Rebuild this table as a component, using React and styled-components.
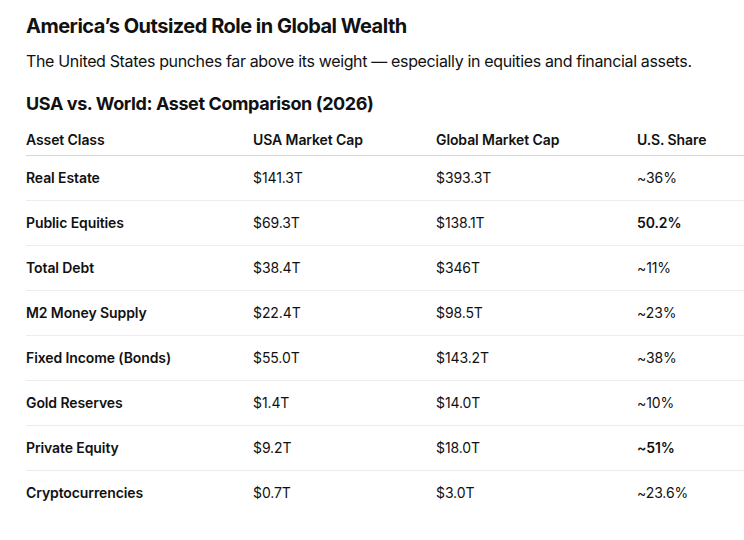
import React from "react";
import styled, { createGlobalStyle } from "styled-components";

const GlobalStyle = createGlobalStyle`
  body {
    margin: 0;
    background: #ffffff;
    font-family: Inter, "Liberation Sans", sans-serif;
    color: #111111;
  }
`;

const Page = styled.div`
  padding: 13px 0 0 26px;
  width: 744px;
  box-sizing: border-box;
  overflow: hidden;
`;

const Title = styled.h1`
  margin: 0;
  font-size: 20px;
  line-height: 26px;
  font-weight: 700;
  letter-spacing: -0.5px;
`;

const Lead = styled.p`
  margin: 10px 0 0;
  font-size: 16px;
  line-height: 24px;
  font-weight: 400;
  letter-spacing: -0.35px;
`;

const Section = styled.h2`
  margin: 19px 0 0;
  font-size: 18px;
  line-height: 24px;
  font-weight: 700;
  letter-spacing: -0.4px;
`;

const Table = styled.div`
  margin-top: 12px;
  display: grid;
  grid-template-columns: 227px 183px 201px 1fr;
`;

const HeadCell = styled.div`
  font-size: 14px;
  line-height: 20px;
  font-weight: 600;
  padding: 2px 0 5px;
  border-bottom: 1px solid #d6d6d6;
  letter-spacing: -0.1px;
`;

const Cell = styled.div`
  font-size: 14px;
  line-height: 20px;
  font-weight: ${(p) => (p.$bold ? 600 : 400)};
  padding: 12px 0;
  border-bottom: 1px solid ${(p) => (p.$last ? "transparent" : "#ececec")};
  letter-spacing: -0.1px;
`;

const rows = [
  ["Real Estate", "$141.3T", "$393.3T", "~36%", false],
  ["Public Equities", "$69.3T", "$138.1T", "50.2%", true],
  ["Total Debt", "$38.4T", "$346T", "~11%", false],
  ["M2 Money Supply", "$22.4T", "$98.5T", "~23%", false],
  ["Fixed Income (Bonds)", "$55.0T", "$143.2T", "~38%", false],
  ["Gold Reserves", "$1.4T", "$14.0T", "~10%", false],
  ["Private Equity", "$9.2T", "$18.0T", "~51%", true],
  ["Cryptocurrencies", "$0.7T", "$3.0T", "~23.6%", false],
];

export default function App() {
  return (
    <>
      <GlobalStyle />
      <Page>
        <Title>America’s Outsized Role in Global Wealth</Title>
        <Lead>
          The United States punches far above its weight — especially in equities and financial assets.
        </Lead>
        <Section>USA vs. World: Asset Comparison (2026)</Section>
        <Table>
          <HeadCell>Asset Class</HeadCell>
          <HeadCell>USA Market Cap</HeadCell>
          <HeadCell>Global Market Cap</HeadCell>
          <HeadCell>U.S. Share</HeadCell>
          {rows.map(([name, usa, global, share, bold], i) => {
            const last = i === rows.length - 1;
            return (
              <React.Fragment key={name}>
                <Cell $bold $last={last}>{name}</Cell>
                <Cell $last={last}>{usa}</Cell>
                <Cell $last={last}>{global}</Cell>
                <Cell $bold={bold} $last={last}>{share}</Cell>
              </React.Fragment>
            );
          })}
        </Table>
      </Page>
    </>
  );
}
